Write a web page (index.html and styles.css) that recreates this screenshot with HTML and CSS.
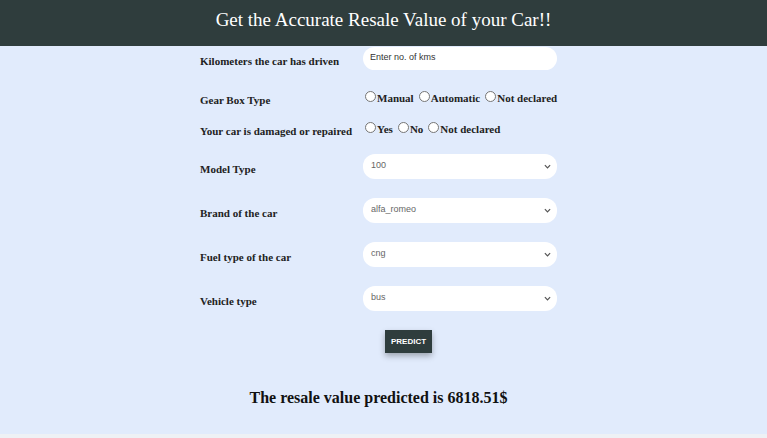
FILE: index.html
```html
<!DOCTYPE html>
<html>
<head>
<meta charset="utf-8">
<link rel="stylesheet" href="styles.css">
</head>
<body>
<header class="topbar">
  <h1 class="title">Get the Accurate Resale Value of your Car!!</h1>
</header>
<main class="page">
  <form class="form">
    <div class="row row-text">
      <label class="label">Kilometers the car has driven</label>
      <input class="field" type="text" placeholder="Enter no. of kms">
    </div>
    <div class="row row-radio row-first-radio">
      <span class="label">Gear Box Type</span>
      <div class="radios">
        <label class="opt"><span class="dot"></span>Manual</label>
        <label class="opt"><span class="dot"></span>Automatic</label>
        <label class="opt"><span class="dot"></span>Not declared</label>
      </div>
    </div>
    <div class="row row-radio">
      <span class="label">Your car is damaged or repaired</span>
      <div class="radios">
        <label class="opt"><span class="dot"></span>Yes</label>
        <label class="opt"><span class="dot"></span>No</label>
        <label class="opt"><span class="dot"></span>Not declared</label>
      </div>
    </div>
    <div class="row row-select">
      <span class="label">Model Type</span>
      <div class="field select"><span>100</span><svg class="chev" viewBox="0 0 8 5" width="7" height="5"><path d="M1 1 L4 4 L7 1" fill="none" stroke="#555" stroke-width="1.4"/></svg></div>
    </div>
    <div class="row row-select">
      <span class="label">Brand of the car</span>
      <div class="field select"><span>alfa_romeo</span><svg class="chev" viewBox="0 0 8 5" width="7" height="5"><path d="M1 1 L4 4 L7 1" fill="none" stroke="#555" stroke-width="1.4"/></svg></div>
    </div>
    <div class="row row-select">
      <span class="label">Fuel type of the car</span>
      <div class="field select"><span>cng</span><svg class="chev" viewBox="0 0 8 5" width="7" height="5"><path d="M1 1 L4 4 L7 1" fill="none" stroke="#555" stroke-width="1.4"/></svg></div>
    </div>
    <div class="row row-select">
      <span class="label">Vehicle type</span>
      <div class="field select"><span>bus</span><svg class="chev" viewBox="0 0 8 5" width="7" height="5"><path d="M1 1 L4 4 L7 1" fill="none" stroke="#555" stroke-width="1.4"/></svg></div>
    </div>
    <div class="actions">
      <button class="btn" type="button">PREDICT</button>
    </div>
  </form>
  <p class="result">The resale value predicted is 6818.51$</p>
</main>
</body>
</html>
```
FILE: styles.css
```css
html, body {
  margin: 0;
  padding: 0;
}
body {
  background: #eef1f5;
  font-family: "Liberation Serif", "Times New Roman", serif;
}
.topbar {
  height: 46px;
  background: #2f3d3d;
  display: flex;
  align-items: center;
  justify-content: center;
}
.title {
  margin: 0;
  color: #ffffff;
  font-weight: normal;
  font-size: 19px;
  padding-bottom: 7px;
}
.page {
  background: #e1ebfc;
  height: 388px;
  display: flex;
  flex-direction: column;
}
.form {
  margin-left: 200px;
  width: 357px;
  display: flex;
  flex-direction: column;
}
.row {
  display: grid;
  grid-template-columns: 163px 194px;
  align-items: center;
}
.row-text {
  height: 24px;
}
.row-radio {
  height: 31px;
}
.row-first-radio {
  margin-top: 12px;
}
.row-select {
  height: 44px;
}
.label {
  font-weight: bold;
  font-size: 11px;
  color: #222;
  padding-top: 5px;
  white-space: nowrap;
}
.field {
  box-sizing: border-box;
  height: 24px;
  width: 194px;
  border: none;
  border-radius: 12px;
  background: #ffffff;
  font-family: "Liberation Sans", Arial, sans-serif;
  font-size: 9px;
  padding: 0 7px;
  outline: none;
}
.field::placeholder {
  color: #333;
}
.row-text .field {
  height: 23px;
  padding-bottom: 3px;
}
.select {
  height: 25px;
  display: flex;
  align-items: center;
  justify-content: space-between;
  color: #666;
  padding: 0 6px 2px 8px;
}
.chev {
  margin-top: 2px;
}
.radios {
  display: flex;
  gap: 5px;
  margin-left: 2px;
  white-space: nowrap;
}
.opt {
  display: flex;
  align-items: center;
  font-weight: bold;
  font-size: 11px;
  color: #222;
}
.dot {
  box-sizing: border-box;
  width: 11px;
  height: 11px;
  border: 1px solid #767676;
  border-radius: 50%;
  background: #fff;
  margin-right: 1px;
  margin-top: -2px;
}
.actions {
  display: flex;
  margin-top: 10px;
  padding-left: 185px;
}
.btn {
  width: 47px;
  height: 23px;
  border: none;
  background: #2f3d3d;
  color: #fff;
  font-family: "Liberation Sans", Arial, sans-serif;
  font-weight: bold;
  font-size: 8px;
  box-shadow: 0 3px 6px rgba(0,0,0,0.3);
  padding: 0;
}
.result {
  margin: 36px 0 0 0;
  text-align: center;
  padding-right: 10px;
  font-weight: bold;
  font-size: 16px;
  color: #111;
}
```
